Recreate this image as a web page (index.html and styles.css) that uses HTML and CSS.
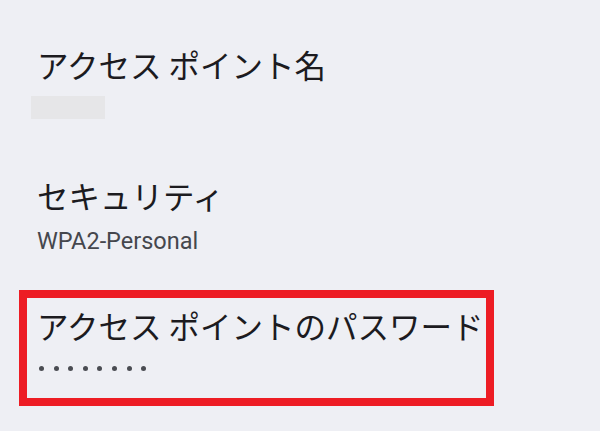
FILE: index.html
```html
<!DOCTYPE html>
<html lang="ja">
<head>
<meta charset="utf-8">
<title>アクセス ポイント</title>
<link rel="stylesheet" href="styles.css">
</head>
<body>
<div class="settings">
  <div class="item item-name">
    <div class="title">アクセス ポイント名</div>
    <div class="redacted"></div>
  </div>
  <div class="item item-security">
    <div class="title">セキュリティ</div>
    <div class="summary">WPA2-Personal</div>
  </div>
  <div class="highlight">
    <div class="item item-password">
      <div class="title">アクセス ポイントのパスワード</div>
      <div class="dots" aria-label="••••••••">
        <span class="dot"></span><span class="dot"></span><span class="dot"></span><span class="dot"></span><span class="dot"></span><span class="dot"></span><span class="dot"></span><span class="dot"></span>
      </div>
    </div>
  </div>
</div>
</body>
</html>
```
FILE: styles.css
```css
html, body {
  margin: 0;
  padding: 0;
}
body {
  background: #eeeff4;
  width: 600px;
  height: 431px;
  overflow: hidden;
  font-family: "Noto Sans CJK JP", "Noto Sans", sans-serif;
}
.settings {
  display: flex;
  flex-direction: column;
}
.item {
  display: flex;
  flex-direction: column;
  padding-left: 37px;
}
.title {
  font-size: 31.5px;
  line-height: 40px;
  color: #1c1b1f;
  white-space: nowrap;
}
.item-name {
  padding-top: 44px;
}
.redacted {
  margin-top: 12px;
  margin-left: -6px;
  width: 74px;
  height: 23px;
  background: #e6e6e8;
}
.item-security {
  padding-top: 56px;
}
.summary {
  margin-top: 11.5px;
  font-family: Roboto, "Noto Sans", sans-serif;
  font-size: 23.5px;
  line-height: 28px;
  color: #45474d;
}
.highlight {
  margin-top: 35.5px;
  margin-left: 19px;
  width: 475px;
  height: 116px;
  box-sizing: border-box;
  border: 8px solid #ed1c24;
}
.item-password {
  padding-left: 10px;
  padding-top: 7px;
}
.dots {
  display: flex;
  gap: 9.6px;
  margin-top: 20.5px;
  padding-left: 2px;
}
.dot {
  width: 5px;
  height: 5px;
  border-radius: 50%;
  background: #4a4c52;
}
```
